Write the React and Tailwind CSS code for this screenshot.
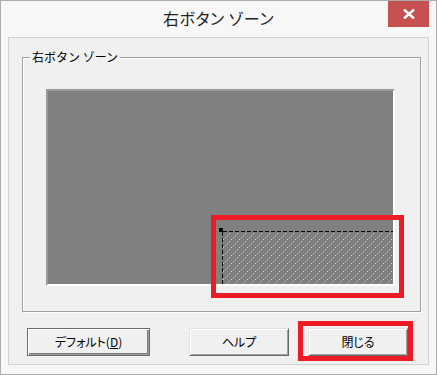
import React from "react";

const jp = "font-['Noto_Sans_CJK_JP','Noto_Sans',sans-serif]";

function HatchZone() {
  const dots = [0, 2, 4, 6].map((k) => (
    <rect key={k} x={k} y={7 - k} width="1" height="1" fill="#86ff86" />
  ));
  return (
    <svg width="174" height="56" viewBox="0 0 174 56" className="block" shapeRendering="crispEdges">
      <defs>
        <pattern id="hp" x="4" y="4" width="8" height="8" patternUnits="userSpaceOnUse">
          {dots}
        </pattern>
      </defs>
      <rect x="4" y="4" width="170" height="52" fill="url(#hp)" />
      <rect x="0" y="0" width="4" height="4" fill="#000" />
      <line x1="4" y1="3.5" x2="174" y2="3.5" stroke="#000" strokeDasharray="4 2" />
      <line x1="3.5" y1="4" x2="3.5" y2="56" stroke="#000" strokeDasharray="4 2" />
    </svg>
  );
}

function Btn({ children, primary, className = "" }) {
  return (
    <button
      className={`h-[28px] bg-[#f0f0f0] text-[12px] text-black [font-feature-settings:'palt'] flex items-center justify-center ${
        primary
          ? "border border-[#6b6b6b] shadow-[inset_1px_1px_0_#fff,inset_-1px_-1px_0_#a0a0a0,inset_-2px_-2px_0_#7a7a7a]"
          : "border border-t-[#e3e3e3] border-l-[#e3e3e3] border-r-[#696969] border-b-[#696969] shadow-[inset_1px_1px_0_#fff,inset_-1px_-1px_0_#a0a0a0]"
      } ${className}`}
    >
      {children}
    </button>
  );
}

export default function App() {
  return (
    <div className={`relative w-[437px] h-[375px] bg-[#f7f7f7] border border-[#acacac] flex flex-col px-[7px] pb-[9px] ${jp}`}>
      {/* title bar */}
      <div className="h-[36px] grid grid-cols-[41px_1fr_41px] items-start shrink-0">
        <div />
        <div className="h-[34px] flex items-center justify-center text-[16px] text-[#222] [font-feature-settings:'palt'] tracking-[0.5px]">
          右ボタン ゾーン
        </div>
        <div className="h-[26px] bg-[#c75050] flex items-center justify-center">
          <svg width="12" height="10" viewBox="0 0 12 10">
            <path d="M1 0.5 L11 9.5 M11 0.5 L1 9.5" stroke="#fff" strokeWidth="2.4" />
          </svg>
        </div>
      </div>

      {/* client */}
      <div className="flex-1 bg-[#f0f0f0] border border-[#d2d2d2] flex flex-col">
        <div className="relative ml-[13px] mt-[19px] w-[399px] h-[255px] border border-[#a0a0a0] shadow-[inset_1px_1px_0_#fff,1px_1px_0_#fff] pl-[23px] pt-[31px]">
          <span className="absolute left-[7px] top-[-10px] px-[2px] bg-[#f0f0f0] text-[12px] leading-[18px] text-black">
            右ボタン ゾーン
          </span>
          <div className="w-[349px] h-[197px] bg-[#808080] border-2 border-t-[#9a9a9a] border-l-[#9a9a9a] border-r-white border-b-white flex justify-end items-end">
            <HatchZone />
          </div>
        </div>

        <div className="flex items-start mt-[16px] pl-[18px]">
          <Btn primary className="w-[123px]">
            デフォルト(<u>D</u>)
          </Btn>
          <Btn className="w-[100px] ml-[39px]">ヘルプ</Btn>
          <Btn className="w-[100px] ml-[19px]">閉じる</Btn>
        </div>
      </div>

      {/* annotation highlights */}
      <div className="absolute left-[210px] top-[214px] w-[193px] h-[83px] border-[5px] border-[#ed1c24]" />
      <div className="absolute left-[297px] top-[320px] w-[115px] h-[40px] border-[5px] border-[#ed1c24]" />
    </div>
  );
}
